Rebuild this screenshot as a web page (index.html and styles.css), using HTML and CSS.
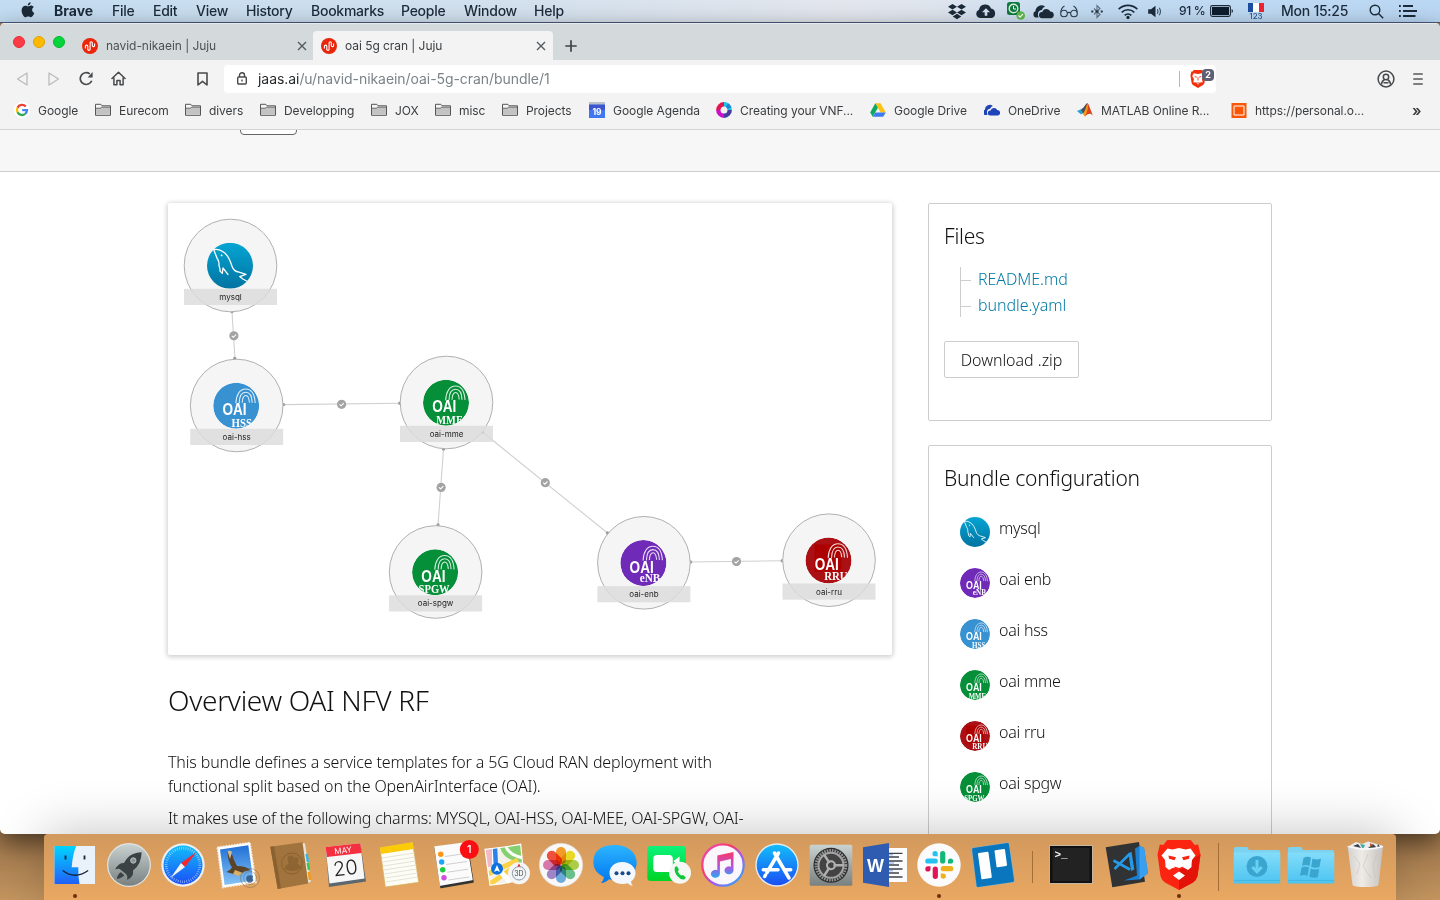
FILE: index.html
```html
<!DOCTYPE html>
<html lang="en">
<head>
<meta charset="utf-8">
<title>oai 5g cran | Juju</title>
<link rel="stylesheet" href="styles.css">
</head>
<body>
<svg class="defs" width="0" height="0" aria-hidden="true">
  <defs>
    <linearGradient id="gSql" x1="0" y1="0" x2="0" y2="1"><stop offset="0" stop-color="#06a5d3"/><stop offset="1" stop-color="#0073a1"/></linearGradient>
    <linearGradient id="gSilver" x1="0" y1="0" x2="0" y2="1"><stop offset="0" stop-color="#c9d3d2"/><stop offset="1" stop-color="#79807f"/></linearGradient>
    <linearGradient id="gFinder" x1="0" y1="0" x2="0" y2="1"><stop offset="0" stop-color="#00d4ff"/><stop offset="1" stop-color="#2060f8"/></linearGradient>
    <linearGradient id="gBlue" x1="0" y1="0" x2="0" y2="1"><stop offset="0" stop-color="#12bdfb"/><stop offset="1" stop-color="#1a4ff5"/></linearGradient>
    <linearGradient id="gMsg" x1="0" y1="0" x2="0" y2="1"><stop offset="0" stop-color="#2cb5ff"/><stop offset="1" stop-color="#0076ef"/></linearGradient>
    <linearGradient id="gGreen" x1="0" y1="0" x2="0" y2="1"><stop offset="0" stop-color="#0cf37c"/><stop offset="1" stop-color="#00d324"/></linearGradient>
    <linearGradient id="gSky" x1="0" y1="0" x2="0" y2="1"><stop offset="0" stop-color="#1f6fd6"/><stop offset="1" stop-color="#86c3f5"/></linearGradient>
    <linearGradient id="gNote" x1="0" y1="0" x2="0" y2="1"><stop offset="0" stop-color="#fb3a62"/><stop offset=".55" stop-color="#b651dc"/><stop offset="1" stop-color="#27a8f5"/></linearGradient>
    <linearGradient id="gRing" x1="0" y1="0" x2="1" y2="1"><stop offset="0" stop-color="#e64fd0"/><stop offset=".35" stop-color="#fb3a62"/><stop offset=".6" stop-color="#a45cf0"/><stop offset="1" stop-color="#13b5fb"/></linearGradient>
    <linearGradient id="gFolder" x1="0" y1="0" x2="0" y2="1"><stop offset="0" stop-color="#83dcfa"/><stop offset="1" stop-color="#4cc4f1"/></linearGradient>
    <linearGradient id="gTrash" x1="0" y1="0" x2="1" y2="0"><stop offset="0" stop-color="#d4d4d4"/><stop offset=".4" stop-color="#f0f0f0"/><stop offset="1" stop-color="#c4c4c4"/></linearGradient>
    <clipPath id="disc"><circle r="23"/></clipPath>

    <symbol id="base" viewBox="-23 -23 46 46" overflow="visible">
      <path d="M-.3-2.6C0-11 3.500-16.800 9.500-16.800S18.500-11 19-2.800M3-2.600C3.200-9 5.500-13.500 9.500-13.500s6.300 4.300 6.500 10.500M6-3C6.200-7.500 7.500-10.300 9.600-10.300s3.300 2.800 3.600 7" fill="none" stroke="#fff" stroke-opacity=".85" stroke-width="1.100"/>
      <text class="oai-word" x="-13.800" y="9.400" textLength="24.200" lengthAdjust="spacingAndGlyphs">OAI</text>
    </symbol>
    <symbol id="mysql" viewBox="-23 -23 46 46">
      <circle r="23" fill="url(#gSql)"/>
      <path d="M-1.700 9L-7 2.200-7.700 7.500-10 5.300C-9.500 2-11.500.500-11-2c.3-3-2-5-2.300-6.500L-16.300-16.200C-13-17-10-16-7.700-14.500-3-12.500 0-6 2 .5 3 3.500 6 6 9 6.300L16 8.600 9.700 10.800 12.500 13 17 15.500" fill="none" stroke="#fff" stroke-width="1.300" stroke-linejoin="round"/>
      <circle cx="-8.400" cy="-10.400" r=".9" fill="#fff"/>
    </symbol>
    <symbol id="hss" viewBox="-23 -23 46 46"><g clip-path="url(#disc)"><circle r="23" fill="#3891d1"/><use href="#base" x="-23" y="-23" width="46" height="46"/><text class="oai-kind" x="-4.600" y="21.200" textLength="20.500" lengthAdjust="spacingAndGlyphs">HSS</text></g></symbol>
    <symbol id="mme" viewBox="-23 -23 46 46"><g clip-path="url(#disc)"><circle r="23" fill="#048f38"/><use href="#base" x="-23" y="-23" width="46" height="46"/><text class="oai-kind" x="-9.700" y="21.500" textLength="26.500" lengthAdjust="spacingAndGlyphs">MME</text></g></symbol>
    <symbol id="spgw" viewBox="-23 -23 46 46"><g clip-path="url(#disc)"><circle r="23" fill="#048f38"/><use href="#base" x="-23" y="-23" width="46" height="46"/><text class="oai-kind" x="-16.500" y="21" textLength="31" lengthAdjust="spacingAndGlyphs">SPGW</text></g></symbol>
    <symbol id="enb" viewBox="-23 -23 46 46"><g clip-path="url(#disc)"><circle r="23" fill="#6f2bb8"/><use href="#base" x="-23" y="-23" width="46" height="46"/><text class="oai-kind" x="-3.600" y="18.800" textLength="20.500" lengthAdjust="spacingAndGlyphs">eNB</text></g></symbol>
    <symbol id="rru" viewBox="-23 -23 46 46"><g clip-path="url(#disc)"><circle r="23" fill="#ab1015"/><path d="M-14-16h27v27h-27z" fill="#ad0000"/><use href="#base" x="-23" y="-23" width="46" height="46"/><text class="oai-kind" x="-4.300" y="19.800" textLength="23.500" lengthAdjust="spacingAndGlyphs">RRU</text></g></symbol>

    <symbol id="juju" viewBox="0 0 16 16"><circle cx="8" cy="8" r="8" fill="#e9260b"/><path d="M3.400 10.500V8.300a1.200 1.200 0 0 1 2.400 0V12M5.800 9v2.200a1.100 1.100 0 0 0 2.300 0V4.800a1.100 1.100 0 0 1 2.200 0v2.700a1.100 1.100 0 0 0 2.300 0V5.500" fill="none" stroke="#fff" stroke-width="1.100"/></symbol>
    <symbol id="folder" viewBox="0 0 16 16"><path d="M.5 13.300V2.300h5.300l1.200 1.500h8.500v9.500z" fill="#f5f5f5" stroke="#565656"/><path d="M1 6h4.300l1.500-1H15v7.800H1z" fill="#c3c3c3"/><path d="M.5 6.200h4.700l1.600-1.100h8.700" fill="none" stroke="#565656" stroke-width=".8"/></symbol>
    <symbol id="x" viewBox="0 0 10 10"><path d="M1 1l8 8M9 1L1 9" stroke="#555b60" stroke-width="1.400"/></symbol>
    <symbol id="clouds" viewBox="0 0 20 14"><path d="M1.800 12.500A3 3 0 0 1 2 6.800 5.500 5.500 0 0 1 11 2.500a4 4 0 0 0-3 3C4.500 5.500 3.500 9.500 5 12.500z"/><path d="M8 13.300a2.900 2.900 0 0 1 .4-5.800 4 4 0 0 1 7.500-.5 3.200 3.200 0 0 1 .8 6.300z"/></symbol>
    <symbol id="check" viewBox="-5 -5 10 10"><circle r="4.600" fill="#a3a3a3"/><path d="M-2.100 0L-.5 1.500 2.200-1.200" fill="none" stroke="#fff" stroke-width="1.100"/></symbol>
    <symbol id="dockfolder" viewBox="0 0 54 66"><path d="M4 49V14.500q0-1.500 1.500-1.500h11q1 0 1.500 1l.8 2H48.500q1.500 0 1.500 1.500V49z" fill="#7dd2f0"/><path d="M3.700 18.500h46.600V48.500q0 1-1 1H4.700q-1 0-1-1z" fill="url(#gFolder)"/><path d="M4 46.500h46" stroke="#3fafd9" stroke-width=".7"/></symbol>
  </defs>
</svg>

<header class="menubar">
  <nav class="menus">
    <svg class="apple" viewBox="0 0 14 16"><path d="M9.600.2c.1 1.600-1.300 3.200-2.800 3.200C6.600 1.900 8 .4 9.600.2zM7 4.400c.7 0 1.700-.8 3-.8 1.200 0 2.200.6 2.800 1.500-2.500 1.500-2 4.900.5 5.900-.7 1.900-2 4.200-3.500 4.200-1 0-1.400-.6-2.600-.6s-1.600.6-2.500.6C2.800 15.200.6 11.500.6 8.400c0-3 1.900-4.700 3.700-4.700 1.200 0 2 .7 2.700.7z" fill="#1a2a38"/></svg>
    <b>Brave</b><span>File</span><span>Edit</span><span>View</span><span>History</span><span>Bookmarks</span><span>People</span><span>Window</span><span>Help</span>
  </nav>
  <div class="status">
    <svg width="18" height="17" viewBox="0 0 18 17" fill="#1c2b3a"><path d="M4.500 1L9 3.700 4.500 6.500 0 3.700zM13.500 1L18 3.700l-4.500 2.800L9 3.700zM4.500 6.700L9 9.500l-4.500 2.700L0 9.500zM13.500 6.700L18 9.500l-4.500 2.700L9 9.500zM9 10.800l4.300 2.600L9 16.200l-4.300-2.800z"/></svg>
    <svg width="20" height="14" viewBox="0 0 20 14" fill="#1c2b3a"><path d="M4.500 14A4.300 4.300 0 0 1 3 5.700 6.200 6.200 0 0 1 15 4.600 4.800 4.800 0 0 1 15.500 14z"/><path d="M10 4.300l4 4h-2.700v3.500H8.700V8.300H6z" fill="#d5e4f2"/></svg>
    <svg width="18" height="18" viewBox="0 0 18 18"><rect x="0" y="0" width="13" height="13" rx="2.500" fill="#0f7a3e"/><circle cx="6.500" cy="6.500" r="4.300" fill="none" stroke="#d9efe0" stroke-width="1.400"/><path d="M6.500 4v3H9" stroke="#fff" fill="none"/><circle cx="13.700" cy="13.500" r="4.300" fill="#5fb94b"/><path d="M11.500 13.500l1.600 1.600 2.800-3" stroke="#fff" stroke-width="1.300" fill="none"/></svg>
    <svg width="21" height="15" viewBox="0 0 18 14" fill="#1c2b3a"><use href="#clouds" x="-.5" width="20" height="14"/></svg>
    <svg width="18" height="13" viewBox="0 0 18 13" fill="none" stroke="#2c3b4a" stroke-width="1.100"><circle cx="4" cy="8.500" r="3.300"/><circle cx="14" cy="8.500" r="3.300"/><path d="M7.300 8q1.700-1.300 3.400 0M.8 7.500Q1 3 4.500 1M17.200 7.500Q17 3 13.500 1"/></svg>
    <svg width="12" height="15" viewBox="0 0 12 15" fill="none" stroke="#5b6d7f" stroke-width="1.100"><path d="M3 4.500l6 6L6 13.500v-12l3 3-6 6"/><path d="M.3 7.500h2M4.500 7.500h3M9.700 7.500h2" stroke="#26343f" stroke-width="2"/></svg>
    <svg width="20" height="15" viewBox="0 0 20 15" fill="none" stroke="#1c2b3a" stroke-width="1.700"><path d="M.7 5.200a13 13 0 0 1 18.600 0M3.700 8.300a9 9 0 0 1 12.600 0M6.700 11.300a4.800 4.800 0 0 1 6.600 0"/><circle cx="10" cy="13.500" r=".8" fill="#1c2b3a"/></svg>
    <svg width="14" height="13" viewBox="0 0 14 13"><path d="M.2 4.300h2.800L7.500 .8v11.400L3 8.700H.2z" fill="#1c2b3a"/><path d="M9.300 4.300q1.300 2.200 0 4.500M11.300 2.800q2.300 3.700 0 7.400" fill="none" stroke="#3c4c5b" stroke-width="1.100"/></svg>
    <span class="pct">91 %</span>
    <svg width="24" height="12" viewBox="0 0 24 12"><rect x=".6" y=".6" width="19.800" height="10.800" rx="1.800" fill="none" stroke="#1c2b3a" stroke-width="1.100"/><rect x="2" y="2" width="17" height="8" fill="#0d1d2e"/><path d="M21.600 4v4q1.400-.6 1.400-2t-1.400-2z" fill="#1c2b3a"/></svg>
    <span class="flag"><i></i><small>123</small></span>
    <span>Mon 15:25</span>
    <svg width="15" height="15" viewBox="0 0 15 15" fill="none" stroke="#1c2b3a" stroke-width="1.400"><circle cx="6" cy="6" r="4.800"/><path d="M9.500 9.500l4.700 4.700"/></svg>
    <svg width="18" height="12" viewBox="0 0 18 12"><path d="M0 1h1.800M0 6h1.800M0 11h1.800M4 1h10M4 6h14M4 11h12.500" stroke="#1c2b3a" stroke-width="1.900"/></svg>
  </div>
</header>

<main class="window">
  <div class="tabstrip">
    <div class="lights"><i class="red"></i><i class="yellow"></i><i class="green"></i></div>
    <div class="tab"><svg width="16" height="16"><use href="#juju"/></svg><span>navid-nikaein | Juju</span><svg class="close"><use href="#x"/></svg></div>
    <div class="tab active"><svg width="16" height="16"><use href="#juju"/></svg><span>oai 5g cran | Juju</span><svg class="close"><use href="#x"/></svg></div>
    <svg class="plus" viewBox="0 0 12 12"><path d="M6 .3v11.400M.3 6h11.400" stroke="#3d4347" stroke-width="1.700"/></svg>
  </div>

  <div class="toolbar">
    <svg width="12" height="14" viewBox="0 0 12 14" fill="none" stroke="#b9bbbc" stroke-width="1.300"><path d="M11 1v12L1.500 7z" stroke-linejoin="round"/></svg>
    <svg width="12" height="14" viewBox="0 0 12 14" fill="none" stroke="#b9bbbc" stroke-width="1.300"><path d="M1 1v12l9.500-6z" stroke-linejoin="round"/></svg>
    <svg width="15" height="15" viewBox="0 0 15 15" fill="none" stroke="#47494b" stroke-width="1.700"><path d="M12.700 9.700A5.900 5.900 0 1 1 10.800 2.900"/><path d="M13.600 1v5.500H8.700z" fill="#47494b" stroke="none"/></svg>
    <svg width="15" height="15" viewBox="0 0 15 15" fill="none" stroke="#47494b" stroke-width="1.500" stroke-linejoin="round" stroke-linecap="round"><path d="M1 7.500L7.500 1.300 14 7.500M2.900 7v6.700h3V9.500h3.200v4.200h3V7"/></svg>
    <svg class="bm" width="11" height="14" viewBox="0 0 11 14" fill="none" stroke="#47494b" stroke-width="1.600" stroke-linejoin="round"><path d="M1 1h9v12L5.500 9.300 1 13z"/></svg>
    <div class="url">
      <svg width="10" height="13" viewBox="0 0 10 13" fill="none" stroke="#47494b" stroke-width="1.400"><rect x=".7" y="5" width="8.600" height="7" rx="1"/><path d="M2.500 5V3.300a2.500 2.500 0 0 1 5 0V5M5 7.500v2"/></svg>
      <p><span>jaas.ai</span>/u/navid-nikaein/oai-5g-cran/bundle/1</p>
      <i class="bar"></i>
      <span class="shield"><svg width="16" height="18" viewBox="0 0 42 50"><path d="M9.300 0h22.700l4 4.500 3.500-.5 2.500 10.300-3 21q-1 4-4 6.500L21 50 7 42Q4 39.500 3 35L0 14.300 2.500 4 6 4.500z" fill="#f4300b"/><path d="M9 9l12 2 12-2 4 8-5 9 2 8-8 1-5 6-5-6-8-1 2-8-5-9z" fill="#fff"/><path d="M12 18l6 2M30 18l-6 2M21 20v9M17 36h8" stroke="#f4300b" stroke-width="2.400" fill="none"/></svg><b>2</b></span>
    </div>
    <svg class="user" width="18" height="18" viewBox="0 0 18 18" fill="none" stroke="#47494b" stroke-width="1.500"><circle cx="9" cy="9" r="7.900"/><circle cx="9" cy="7" r="2.700"/><path d="M4.300 14.500q.7-4 3.200-4.800M13.700 14.500q-.7-4-3.200-4.800M6.500 12.800h5"/></svg>
    <svg width="10" height="12" viewBox="0 0 10 12"><path d="M.8 1h8.400M.8 6h8.400M.8 11h8.400" stroke="#565859" stroke-width="1.700" stroke-linecap="round"/></svg>
  </div>

  <div class="bookmarks">
    <span><svg viewBox="0 0 16 16"><circle cx="8" cy="8" r="8" fill="#fff"/><g fill="none" stroke-width="2.300"><path d="M11.800 4.600A5 5 0 0 0 3.500 5.800" stroke="#ea4335"/><path d="M3.500 5.800a5 5 0 0 0 0 4.400" stroke="#fbbc05"/><path d="M3.500 10.200a5 5 0 0 0 7.700 1.600" stroke="#34a853"/><path d="M11.200 11.800A5 5 0 0 0 13 8.200H8.200" stroke="#4285f4"/></g></svg>Google</span>
    <span><svg><use href="#folder"/></svg>Eurecom</span>
    <span><svg><use href="#folder"/></svg>divers</span>
    <span><svg><use href="#folder"/></svg>Developping</span>
    <span><svg><use href="#folder"/></svg>JOX</span>
    <span><svg><use href="#folder"/></svg>misc</span>
    <span><svg><use href="#folder"/></svg>Projects</span>
    <span><svg viewBox="0 0 16 16"><path d="M0 2h16v14H0z" fill="#3367d6"/><path d="M0 0h16v3H0z" fill="#b9bfcb"/><path d="M0 2.500h16V8H0z" fill="#3a55cf"/><path d="M0 8h16v8H0z" fill="#3f76f2"/><text x="8" y="12.500" text-anchor="middle" class="cal-fav">19</text></svg>Google Agenda</span>
    <span><svg viewBox="0 0 16 16" fill="none" stroke-width="4.400"><path d="M8 2.300A5.700 5.700 0 0 1 13.700 8" stroke="#18c7e3"/><path d="M13.700 8A5.700 5.700 0 0 1 8 13.700" stroke="#473a9f"/><path d="M8 13.700A5.700 5.700 0 0 1 2.300 8" stroke="#c911c9"/><path d="M2.300 8A5.700 5.700 0 0 1 8 2.300" stroke="#e3144f"/><path d="M11 3.200a5.700 5.700 0 0 1 2.400 3" stroke="#2286d8"/></svg>Creating your VNF...</span>
    <span><svg viewBox="0 0 16 16"><path d="M5.300 1.200h5.200l5.300 9.200h-5.200z" fill="#fbc215"/><path d="M5.300 1.200l2.600 4.600-5.200 9L.2 10.400z" fill="#0da960"/><path d="M5.400 10.400h10.400l-2.600 4.400H2.700z" fill="#3f7bee"/></svg>Google Drive</span>
    <span><svg viewBox="0 0 18 14" fill="#1f43b8"><use href="#clouds" x="-1" width="20" height="14"/></svg>OneDrive</span>
    <span><svg viewBox="0 0 16 16"><path d="M0 9l4-1.800L7 10l-3 2.600z" fill="#2aa4cf"/><path d="M4 7.200C7 6.500 8 2 10.500 1L9 9l-3 3z" fill="#43515c"/><path d="M10.500 1C12.500 3 14 10 16 13.500 13 10.500 10.500 12 8 14.500L6 11.500C8.500 9 9 3 10.500 1z" fill="#d7431c"/><path d="M10.500 1c1 4 0 9-2.500 13.500L6 11.500C8.500 9 9.500 4 10.500 1z" fill="#f59b1c"/></svg>MATLAB Online R...</span>
    <span><svg viewBox="0 0 16 16"><path d="M.5 1h15v15H.5z" fill="#fb5607"/><path d="M3 4h10v9H3z" fill="none" stroke="#fff"/></svg>https://personal.o...</span>
    <b>»</b>
  </div>

  <div class="page">
    <div class="pagehead"><button></button></div>
    <div class="cols">
      <article>
        <svg class="canvas" viewBox="168 203 724 452">
          <g stroke="#d0d0d0" stroke-width="1.100"><path d="M232 312l3 47M283.500 404.600L400 403.200M443.500 449L438 525.500M483 432.500L607.500 533M690 562l92.500-1.300"/></g>
          <g fill="#9c9c9c"><circle cx="232" cy="311.500" r="1.700"/><circle cx="234.700" cy="358.500" r="1.700"/><circle cx="283.500" cy="404.600" r="1.700"/><circle cx="399.800" cy="403.200" r="1.700"/><circle cx="443.500" cy="449" r="1.700"/><circle cx="438" cy="525" r="1.700"/><circle cx="483" cy="432.500" r="1.500"/><circle cx="607.500" cy="533" r="1.700"/><circle cx="690.500" cy="562" r="1.700"/><circle cx="782.300" cy="560.700" r="1.700"/></g>
          <g><use href="#check" x="228.900" y="330.800" width="10" height="10"/><use href="#check" x="336.600" y="399.300" width="10" height="10"/><use href="#check" x="436.100" y="482.400" width="10" height="10"/><use href="#check" x="540.300" y="477.700" width="10" height="10"/><use href="#check" x="731.500" y="556.600" width="10" height="10"/></g>
          <g class="node" transform="translate(230.500 265.500)"><circle r="46.300"/><use href="#mysql" x="-23.500" y="-22.700" width="46" height="46"/><rect x="-46.500" y="23.300" width="93" height="16.200"/><text y="34.400">mysql</text></g>
          <g class="node" transform="translate(236.700 405.500)"><circle r="46.300"/><use href="#hss" x="-23.500" y="-22.700" width="46" height="46"/><rect x="-46.500" y="23.300" width="93" height="16.200"/><text y="34.400">oai-hss</text></g>
          <g class="node" transform="translate(446.500 402.500)"><circle r="46.300"/><use href="#mme" x="-23.500" y="-22.700" width="46" height="46"/><rect x="-46.500" y="23.300" width="93" height="16.200"/><text y="34.400">oai-mme</text></g>
          <g class="node" transform="translate(435.600 572)"><circle r="46.300"/><use href="#spgw" x="-23.500" y="-22.700" width="46" height="46"/><rect x="-46.500" y="23.300" width="93" height="16.200"/><text y="34.400">oai-spgw</text></g>
          <g class="node" transform="translate(643.900 562.800)"><circle r="46.300"/><use href="#enb" x="-23.500" y="-22.700" width="46" height="46"/><rect x="-46.500" y="23.300" width="93" height="16.200"/><text y="34.400">oai-enb</text></g>
          <g class="node" transform="translate(829 560.200)"><circle r="46.300"/><use href="#rru" x="-23.500" y="-22.700" width="46" height="46"/><rect x="-46.500" y="23.300" width="93" height="16.200"/><text y="34.400">oai-rru</text></g>
        </svg>
        <h1>Overview OAI NFV RF</h1>
        <p>This bundle defines a service templates for a 5G Cloud RAN deployment with<br><span class="line2">functional split based on the OpenAirInterface (OAI).</span></p>
        <p class="second">It makes use of the following charms: MYSQL, OAI-HSS, OAI-MEE, OAI-SPGW, OAI-</p>
      </article>
      <aside>
        <section class="card files">
          <h2>Files</h2>
          <ul class="tree"><li><span>README.md</span></li><li><span>bundle.yaml</span></li></ul>
          <button class="download">Download .zip</button>
        </section>
        <section class="card config">
          <h2>Bundle configuration</h2>
          <ul class="apps">
            <li><svg><use href="#mysql"/></svg>mysql</li>
            <li><svg><use href="#enb"/></svg>oai enb</li>
            <li><svg><use href="#hss"/></svg>oai hss</li>
            <li><svg><use href="#mme"/></svg>oai mme</li>
            <li><svg><use href="#rru"/></svg>oai rru</li>
            <li><svg><use href="#spgw"/></svg>oai spgw</li>
          </ul>
        </section>
      </aside>
    </div>
  </div>
</main>

<footer class="desktop">
  <div class="dock">
    <svg viewBox="0 0 54 66"><path d="M6.500 12H47v38H6.500z" fill="#e9f1fb"/><path d="M6.500 12h21.700q-3.500 8-4.500 21.300h6.600Q30 42 31.500 50h-25z" fill="url(#gFinder)"/><path d="M17.500 21.500v4M36.500 21.500v4" stroke="#152538" stroke-width="1.800"/><path d="M14.700 36.500q12 9.500 25.500 0" fill="none" stroke="#152538" stroke-width="1.300"/><circle cx="27" cy="62" r="2" fill="#6b2f06"/></svg>
    <svg viewBox="0 0 54 66"><circle cx="27" cy="31" r="21.300" fill="url(#gSilver)" stroke="#dfe5e5" stroke-width="1.200"/><path d="M39.700 18.300Q30 18.500 25 24.500q-1.500 2-3 4.500-5-1-9 6.500 4-1.500 6 .5l5.500 4.500q1.500 2 .5 5.500 7-3 6-9.500 8-5 8.700-18.200zM15 43.500q2-5 4-5.200l3.300 3Q21 43.500 15 45z" fill="#3c4143"/><circle cx="31.300" cy="26.500" r="2.700" fill="#8e9797" stroke="#b9c2c2"/></svg>
    <svg viewBox="0 0 54 66"><circle cx="27" cy="31" r="21.700" fill="#e9eef2"/><circle cx="27" cy="31" r="19.500" fill="url(#gBlue)"/><circle cx="27" cy="31" r="16.800" fill="none" stroke="#fff" stroke-opacity=".65" stroke-width="2.600" stroke-dasharray=".6 1.600"/><path d="M40.500 18L29 33 25 29z" fill="#f5272d"/><path d="M14.500 44L25 29l4 4z" fill="#f3f3f3"/></svg>
    <svg viewBox="0 0 54 66"><path d="M7.300 13.300L40 8.500 46 48.500 12.700 53.500z" fill="#fff" stroke="#f3efe8" stroke-width="1.600" stroke-dasharray="1.600 1.200"/><path d="M10 15.500L38.300 11.200 43.300 46.500 14.600 51z" fill="url(#gSky)"/><path d="M17.500 17q5 1.500 6 8l3.500 7q9 0 13.500 4l-6 1.500q-5 5-11 2.500l-7-2q4-2 5.500-4.500-4.500-7-4.500-16.500z" fill="#5b4327"/><path d="M25 36l8 3-5 3-5-2z" fill="#d8b06a"/><path d="M17.500 17q3-1 4.500 1l-2 7z" fill="#cdb999"/><circle cx="40" cy="44" r="9.500" fill="none" stroke="#6b6250" stroke-opacity=".5" stroke-width=".9"/><circle cx="40" cy="44" r="6.500" fill="none" stroke="#6b6250" stroke-opacity=".4"/><path d="M37 42q3-1.500 6 0-1.500 3 .5 4-2 3.500-3.500 2.500-3 1-4-4z" fill="#2c4f7c" fill-opacity=".8"/></svg>
    <svg viewBox="0 0 54 66"><path d="M37.700 9l3.300.5L47 47.500 43 49.500z" fill="#e8e3d6"/><path d="M41.500 20l2.300-.3 1.300 8-2.400.3z" fill="#2bb7e8"/><path d="M42.600 29l2.400-.3 1.200 7-2.400.3z" fill="#36c94d"/><path d="M43.600 38l2.600-.3 1.300 8-2.700.5z" fill="#f09a1e"/><path d="M6.300 12.700L38.500 8.300 44.300 49.500 13.700 55z" fill="#a0743c"/><path d="M6.300 12.700L10 12.200 17 54.300 13.700 55z" fill="#8a6130"/><circle cx="28" cy="29.500" r="10.500" fill="none" stroke="#8a6130" stroke-width="1"/><path d="M20.500 35q1-4 4-5-2.500-8 1.500-8.500t3.500 2.500q4-2.500 5 1 .5 3-1.500 5 4 1 4.500 3.500-7 6-17 1.500z" fill="#8a6130" fill-opacity=".8"/></svg>
    <svg viewBox="0 0 54 66"><path d="M7.700 13.500L42.500 10 48 47.500 11 53z" fill="#5c6770"/><path d="M7.500 13L42.300 9.200 46.500 44.500 11.500 49.500z" fill="#f7f7f7"/><path d="M7.500 13L42.300 9.200 43.600 19 9 23z" fill="#f42f3f"/><text class="cal-month" transform="rotate(-7 25 19)" x="25.500" y="19.300">MAY</text><text class="cal-day" transform="rotate(-7 27 34)" x="27.500" y="41">20</text></svg>
    <svg viewBox="0 0 54 66"><path d="M8 14L40.500 8.500 46.700 48.300 13.300 53z" fill="#fdfdf6" stroke="#d6b256" stroke-width=".7"/><path d="M8 13.500L40.500 8.300 41.700 15 9 20z" fill="#fccb08"/><path d="M10 24l32.500-5M10.600 28l32.500-5M11.200 32l32.500-5M11.800 36l32.500-5M12.400 40l32.500-5M13 44l32.500-5M13.500 48l32.500-5" stroke="#dcdccf" stroke-width=".8"/></svg>
    <svg viewBox="0 0 54 66"><path d="M9 14L41 10 47 48 15 53.500z" fill="#333" stroke="#333" stroke-width="1.500" stroke-linejoin="round"/><path d="M9 13L40 9 46 45.500 14.500 51z" fill="#fbfbfb" stroke="#fbfbfb" stroke-width="1.500" stroke-linejoin="round"/><path d="M19 22.500l21-3M20 30.500l21-3M21.200 38.200l21-3M22.300 46l21-3" stroke="#d0d0d0"/><circle cx="14.700" cy="20.200" r="2.700" fill="#ff9417"/><circle cx="15.700" cy="28" r="2.700" fill="#1aa7f8"/><circle cx="16.700" cy="35.800" r="2.700" fill="#1ccc3c"/><circle cx="18" cy="43.800" r="2.700" fill="#cf4fe0"/><circle cx="43.300" cy="15.500" r="9.500" fill="#fb0d14"/><text class="badge" x="43.300" y="19.300">1</text></svg>
    <svg viewBox="0 0 54 66"><path d="M5 15.300L16 14 28 12.500 40.700 10.300 44.300 47.700 32 47.700 21 50 10 51z" fill="#f4f1e9"/><path d="M5 15.300l8-1 4 17-10 2z" fill="#f2b9c5"/><path d="M20 13.500l20.700-3 2 20-9-4q-10-2-13.700-13z" fill="#84d06e"/><path d="M26 12.700q3 8 16 11" fill="none" stroke="#fff" stroke-width="3"/><path d="M8 40l30-14M10 50l20-14 14 5" fill="none" stroke="#fcd143" stroke-width="5"/><path d="M14.500 14v20M30 48L17 34" stroke="#fff" stroke-width="5"/><path d="M15 14l1 20" stroke="#2a83ea" stroke-width="4.500"/><path d="M5 15.300L16 14 28 12.500 40.700 10.300 44.300 47.700 32 47.700 21 50 10 51z" fill="none" stroke="#fff" stroke-width="1.200"/><circle cx="17" cy="34.700" r="6" fill="#0c72e0"/><path d="M17 31l3 7-3-1.500-3 1.500z" fill="#fff"/><circle cx="39" cy="39.300" r="11" fill="#f4f5f6"/><circle cx="39" cy="39.300" r="6.700" fill="none" stroke="#8c9aa6"/><text class="three-d" x="39" y="42">3D</text><path d="M37.500 32.500L39 29.500l1.500 3z" fill="#f01e28"/></svg>
    <svg viewBox="0 0 54 66"><circle cx="27" cy="31" r="21.700" fill="#f8f8f8" stroke="#d9d9d9" stroke-width=".6"/><g class="petals"><rect x="22" y="13" width="10" height="17.500" rx="5" fill="#fb9617"/><rect x="22" y="13" width="10" height="17.500" rx="5" fill="#eedd18" transform="rotate(45 27 31)"/><rect x="22" y="13" width="10" height="17.500" rx="5" fill="#a9cf3b" transform="rotate(90 27 31)"/><rect x="22" y="13" width="10" height="17.500" rx="5" fill="#5fc083" transform="rotate(135 27 31)"/><rect x="22" y="13" width="10" height="17.500" rx="5" fill="#63a9de" transform="rotate(180 27 31)"/><rect x="22" y="13" width="10" height="17.500" rx="5" fill="#9b7fc6" transform="rotate(225 27 31)"/><rect x="22" y="13" width="10" height="17.500" rx="5" fill="#d971a8" transform="rotate(270 27 31)"/><rect x="22" y="13" width="10" height="17.500" rx="5" fill="#f4432f" transform="rotate(315 27 31)"/></g></svg>
    <svg viewBox="0 0 54 66"><path d="M27 11c12.500 0 21.700 7.500 21.700 17.500S39.500 46 27 46q-3 0-6-.7-4.500 4-8 3.700 3-2.500 2.800-6Q5.300 38 5.300 28.500 5.300 11 27 11z" fill="url(#gMsg)"/><path d="M34.500 28C42 28 47.500 33 47.500 39q0 5-4.500 8.500.2 3 1.800 4.500-3-.5-5-2.800-2.500.8-5.300.8C27 50 21.500 45.500 21.500 39S27 28 34.500 28z" fill="#f2f8fd"/><g fill="#1b4b86"><circle cx="28.500" cy="39.300" r="2"/><circle cx="34.500" cy="39.300" r="2"/><circle cx="40.500" cy="39.300" r="2"/></g></svg>
    <svg viewBox="0 0 54 66"><rect x="5.300" y="12" width="38.700" height="35" rx="3.500" fill="url(#gGreen)"/><rect x="11.300" y="21" width="19.500" height="17" rx="3.500" fill="#fff"/><path d="M31.500 27l6-4.500v12z" fill="#fff"/><circle cx="38" cy="38.700" r="11" fill="#f5f7f5"/><path d="M32.800 33.500q1.500-2 2.700-.5l1.300 2.500q0 1-1 1.700.8 2.500 3.400 4.300 1.200-.8 2-.3l2.200 1.700q1 1.300-1.300 2.600-3.500.5-6.800-3.500t-2.500-8.500z" fill="#0fc83a"/></svg>
    <svg viewBox="0 0 54 66"><circle cx="27" cy="31" r="20.700" fill="#f9f7fc" stroke="url(#gRing)" stroke-width="2.200"/><path d="M21.300 21.500L37.500 18v18.300a4.500 4 0 1 1-2.600-3.600V25l-11 2.500v12.300a4.500 4 0 1 1-2.600-3.600z" fill="url(#gNote)"/></svg>
    <svg viewBox="0 0 54 66"><circle cx="27" cy="31" r="21.700" fill="#e5eaf2"/><circle cx="27" cy="31" r="20.300" fill="url(#gBlue)"/><g stroke="#fff" stroke-width="3.500" stroke-linecap="round"><path d="M28.500 19L17 38.500M24.500 19l14.500 25M15.500 41l-.8 1.500M13.300 35.700H28M35.500 35.700h5.200"/></g></svg>
    <svg viewBox="0 0 54 66"><rect x="5.700" y="10.700" width="42.600" height="41" rx="1.500" fill="url(#gSilver)"/><circle cx="27" cy="31.300" r="17.500" fill="#2e2e2e"/><circle cx="27" cy="31.300" r="14.800" fill="none" stroke="#949494" stroke-width="3" stroke-dasharray="1.600 1"/><circle cx="27" cy="31.300" r="12.500" fill="#434343" stroke="#a5a5a5" stroke-width="2"/><circle cx="27" cy="31.300" r="4" fill="none" stroke="#b5b5b5" stroke-width="2"/><path d="M29.500 31.300h10M25.500 29L20 20.500M25.500 33.500L20 42" stroke="#b0b0b0" stroke-width="2.400"/></svg>
    <svg viewBox="0 0 54 66"><path d="M29 14h20v34H29z" fill="#fbfbfb"/><path d="M31 19.300h13.500M31 23h10M31 27h13.500M31 31h10M31 35h13.500M31 39h10M31 43h13.500" stroke="#3d4450" stroke-width="1.300"/><path d="M31 20.800h4M31 29h5M31 36.800h4" stroke="#7ca5e0"/><path d="M5 13.300L31 9v44L5 48.700z" fill="#2f5cb0"/><text class="word-w" x="17.500" y="38">W</text></svg>
    <svg viewBox="0 0 54 66"><circle cx="27" cy="31" r="21.700" fill="#fbfbfb"/><g stroke-linecap="round" stroke-width="5.200"><path d="M15.800 27h7.400" stroke="#25c1f0"/><path d="M30.700 19.700v7.300" stroke="#12b77a"/><path d="M31.300 34.700h7.400" stroke="#eeb11d"/><path d="M23.300 35v7.300" stroke="#e11457"/></g><path d="M25.700 22.300h-2.600a2.600 2.600 0 1 1 2.600-2.600z" fill="#25c1f0"/><path d="M36 29.600V27a2.600 2.600 0 1 1 2.600 2.600z" fill="#12b77a"/><path d="M28.700 39.500h2.600a2.600 2.600 0 1 1-2.600 2.600z" fill="#eeb11d"/><path d="M18.500 32.300v2.600a2.600 2.600 0 1 1-2.600-2.600z" fill="#e11457"/><circle cx="27" cy="62" r="2" fill="#6b2f06"/></svg>
    <svg viewBox="0 0 54 66"><path d="M7.500 15.500L41.500 10.500 46.700 46.500 12 51.500z" fill="#0a76bd" stroke="#8fb2c0" stroke-width="4" stroke-linejoin="round"/><path d="M7.500 15.500L41.500 10.500 46.700 46.500 12 51.500z" fill="#0a76bd" stroke="#0a76bd" stroke-width="2.800" stroke-linejoin="round"/><path d="M13 20L21.500 18.800 24.800 43 16.300 44.300zM29.500 17.200l8.500-1.200L40 31l-8.500 1.300z" fill="#fff" stroke="#fff" stroke-width="2" stroke-linejoin="round"/></svg>
    <i class="sep short"></i>
    <svg viewBox="0 0 54 66"><path d="M5.300 11.300h43.400v38.400H5.300z" fill="#bdbdbd"/><path d="M6 12h42v37H6z" fill="#111"/><path d="M8.500 14h37v33h-37z" fill="#222"/><text class="prompt" x="10.500" y="24">&gt;_</text></svg>
    <svg viewBox="0 0 54 66"><path d="M7.700 13.300L41 8l6 39.700-32.700 5.600z" fill="#303234"/><path d="M37 14.500l4.500-2.500 4.500 1.500L50 39.300 41.500 45.500l-15.500 1 13-5z" fill="#1b7fd0"/><path d="M46 13.500L50 39.300 41.500 45.500 41.500 12z" fill="#3a9ff0"/><path d="M15.500 26.500l16.500 9M32 19.500L16.500 35" fill="none" stroke="#249ae8" stroke-width="2.600"/><path d="M30.500 19.500l3-1.800 2.800 17.800-3.300 1.500z" fill="#249ae8"/></svg>
    <svg viewBox="0 0 54 66"><path d="M15.300 6h23.400l4 5 3.500-.5 2.300 10-3 21.500q-1 4-4.500 6.500L27 56 13 48.500Q9.500 46 8.500 42L5.500 20.500l2.300-10 3.500.5z" fill="#fb2410"/><path d="M27 32v24l14-7.500q3.500-2.500 4.500-6.500l3-21.500z" fill="#e3130a"/><path d="M15.500 14.500l5 1 6.500-1.500 6.500 1.500 5-1 5 7-3.500 4.500q-.5 4-.5 7l-3.500 3-3.500-2-3-.5-3 2-3-2-3 .5-3.500 2-3.500-3q0-3-.5-7l-3.500-4.500zM27 37.500l6 4-6 4.500-6-4.500z" fill="#fff"/><path d="M16.500 21.500l7.500 1.700-1.500 3-5.500-1.500zM37.500 21.500L30 23.200l1.500 3 5.500-1.500zM22.500 32.500L27 34l4.500-1.500-.5 2-4 1.300-4-1.300z" fill="#fb2410"/><circle cx="27" cy="62" r="2" fill="#6b2f06"/></svg>
    <i class="sep"></i>
    <svg viewBox="0 0 54 66"><use href="#dockfolder" width="54" height="66"/><circle cx="27" cy="32.500" r="10.500" fill="#3aa5cf"/><path d="M27 26v11M22.300 33l4.700 4.900 4.700-4.900" fill="none" stroke="#69d0f5" stroke-width="3"/></svg>
    <svg viewBox="0 0 54 66"><use href="#dockfolder" width="54" height="66"/><path d="M19.500 24q4-2.300 7.500-.3l-1.500 8.300q-3.500-2-7.500 0zM28.500 24.500q4 2 8.500.3L35.500 33q-4.500 1.700-8.300-.3zM17.500 33.500q4-2 7.500 0L23.500 42q-3.500-2-7.500 0zM26.800 34.500q4 2 8.400.2l-1.500 8.500q-4.500 1.500-8.300-.5z" fill="#3aa5cf"/></svg>
    <svg viewBox="0 0 54 66"><path d="M11 12L18 8l6 2 6-2.500 7 2 7 2-1 5H11z" fill="#e9ecee"/><path d="M15 12l5-2 3 4zM30 14l5-4 4 4zM40 10l3 4h-4z" fill="#3b3f44"/><path d="M22 10l5 1-2 4z" fill="#36a9a0"/><path d="M32 9l3 2-3 2z" fill="#c05a31"/><path d="M9.700 12.500q17.300 5 35.300 0L40.500 51q-1 2-13 2t-13-2z" fill="url(#gTrash)" fill-opacity=".93"/><path d="M16 22l6 8-3 10M30 20l-5 12 8 12M39 20l-4 10 2 14" fill="none" stroke="#bdbdbd" stroke-width="1" stroke-opacity=".5"/><path d="M9.700 12.500q17.300 5 35.300 0" fill="none" stroke="#fafafa" stroke-width="1.300"/></svg>
  </div>
</footer>
</body>
</html>
```
FILE: styles.css
```css
* { box-sizing: border-box; }

html, body { margin: 0; height: 900px; overflow: hidden; }

body {
  width: 1440px;
  display: flex;
  flex-direction: column;
  font-family: Inter, "Liberation Sans", sans-serif;
  background: linear-gradient(#a37a4d 0 834px, #a67c4f 850px, #c3955f 900px);
  color: #1c2b3a;
}

h1, h2, p, ul { margin: 0; padding: 0; font-weight: 300; list-style: none; }
svg { display: block; flex: none; }
.defs { position: absolute; }

/* Menu bar */
.menubar {
  height: 23px;
  flex: none;
  display: flex;
  justify-content: space-between;
  border-bottom: 1px solid #4a5a7c;
  background: linear-gradient(90deg, #c3dcf1, #d3e1ee 35%, #e3e6ed 58%, #dfe5ee 65%, #c2dbf2 75%, #bad7f3);
  font-size: 14px;
  font-weight: 450;
  line-height: 22px;
  letter-spacing: -0.25px;
  white-space: nowrap;
}
.menus {
  display: grid;
  grid-template-columns: 33px 58px 41px 43px 50px 65px 90px 63px 70px 40px;
  padding-left: 21px;
}
.menus b { letter-spacing: 0; }
.menus .apple { width: 14px; height: 16px; margin-top: 2px; }
.status {
  display: grid;
  grid-template-columns: 28px 31px 26px 27px 31px 27px 30px 31px 31px 38px 33px 88px 30px 41px;
  align-items: center;
}
.status .pct { font-size: 12px; letter-spacing: -0.3px; }
.flag { display: flex; flex-direction: column; width: 16px; align-items: center; }
.flag i { width: 16px; height: 9px; background: linear-gradient(90deg, #1c4da1 5px, #fff 5px 11px, #ee2233 11px); }
.flag small { font-size: 8px; line-height: 8px; letter-spacing: 0; color: #265a8c; }

/* Browser window */
.window {
  height: 811px;
  flex: none;
  display: flex;
  flex-direction: column;
  overflow: hidden;
  border-radius: 5px;
  background: #fff;
  box-shadow: 0 8px 24px rgba(0, 0, 0, 0.55);
}
.tabstrip {
  height: 37px;
  flex: none;
  display: flex;
  align-items: flex-end;
  background: #d4d9dc;
  border-top: 1px solid #e6eaec;
}
.lights { display: flex; gap: 8px; align-self: flex-start; padding: 12px 0 0 13px; width: 74px; }
.lights i { width: 12px; height: 12px; border-radius: 50%; }
.red { background: #fc3b47; border: 1px solid #e52f3a; }
.yellow { background: #fdb900; border: 1px solid #e2a300; }
.green { background: #05d43a; border: 1px solid #04b930; }
.tab {
  width: 239px;
  height: 29px;
  display: flex;
  align-items: center;
  gap: 8px;
  padding: 0 6px 0 8px;
  border-radius: 4px 4px 0 0;
  font-size: 12px;
  letter-spacing: -0.05px;
  color: #4b5156;
}
.tab.active { background: #f3f3f3; width: 240px; padding-right: 7px; color: #3a3f43; }
.tab span { flex: 1; }
.tab .close { width: 10px; height: 10px; }
.plus { width: 12px; height: 12px; margin: 0 0 8px 12px; }

.toolbar {
  height: 37px;
  flex: none;
  display: flex;
  align-items: center;
  padding: 0 17px 0 16px;
  background: #f3f3f3;
}
.toolbar > svg { margin-right: 20px; }
.toolbar > svg:nth-child(2) { margin-right: 19px; }
.toolbar > svg:nth-child(3) { margin-right: 17px; }
.toolbar > svg:nth-child(4) { margin-right: 71px; }
.toolbar > svg.bm { margin-right: 16px; }
.url {
  width: 992px;
  height: 28px;
  display: flex;
  align-items: center;
  padding: 0 2px 0 13px;
  border-radius: 4px;
  background: #fff;
  font-size: 14px;
  letter-spacing: -0.06px;
  color: #7b8388;
}
.url p { margin-left: 11px; flex: 1; font-weight: 400; }
.url p span { color: #26292b; }
.bar { width: 1px; height: 16px; background: #b7b7b7; margin-right: 10px; }
.shield { position: relative; width: 24px; height: 18px; }
.shield b {
  position: absolute;
  left: 12px;
  top: -1px;
  width: 12px;
  height: 12px;
  border-radius: 4px;
  background: #5f6073;
  color: #fff;
  font-size: 9px;
  line-height: 12px;
  text-align: center;
}
.toolbar > svg.user { margin: 0 18px 0 161px; }
.toolbar > svg:last-child { margin: 0; }

.bookmarks {
  height: 33px;
  flex: none;
  display: grid;
  grid-template-columns: 81px 90px 75px 111px 64px 67px 87px 127px 154px 114px 93px 154px 181px 20px;
  align-items: center;
  padding: 0 0 5px 14px;
  background: #f3f3f3;
  border-bottom: 1px solid #d3d4d5;
  font-size: 12px;
  letter-spacing: -0.07px;
  color: #3a3d40;
  white-space: nowrap;
}
.bookmarks span { display: flex; align-items: center; gap: 8px; padding-bottom: 1px; }
.bookmarks svg { width: 16px; height: 16px; }
.bookmarks b { font-size: 15px; font-weight: 600; line-height: 18px; }
.cal-fav { font: 700 8.5px Inter, sans-serif; fill: #fff; }

/* Web page */
.page { flex: 1; min-height: 0; overflow: hidden; }
.page, .page button { font-family: "Noto Sans", "Open Sans", sans-serif; font-weight: 300; font-size: 16px; color: #111; letter-spacing: -0.14px; }
.pagehead { height: 42px; background: #f7f7f7; border-bottom: 1px solid #cdcdcd; overflow: hidden; }
.pagehead button {
  display: block;
  width: 57px;
  height: 37px;
  margin: -32px 0 0 240px;
  border: 1px solid #666;
  border-radius: 4px;
  background: #fff;
}
.cols { display: flex; justify-content: space-between; width: 1104px; margin: 31px auto 0; }
article { width: 724px; white-space: nowrap; }
.canvas {
  width: 724px;
  height: 452px;
  border-radius: 2px;
  background: #fff;
  box-shadow: 0 1px 5px 1px rgba(0, 0, 0, 0.2);
}
.node circle { fill: #f5f5f5; stroke: #b0b0b0; stroke-width: 1; }
.node rect { fill: #dcdcdc; fill-opacity: 0.82; }
.node text { font: 400 8px Inter, "Liberation Sans", sans-serif; letter-spacing: 0; fill: #222; text-anchor: middle; }
.oai-word { font: 700 16px "Liberation Sans", sans-serif; letter-spacing: 0; fill: #fff; }
.oai-kind { font: 700 11.5px "Liberation Serif", serif; letter-spacing: 0; fill: #fff; }
.node .oai-word, .node .oai-kind { text-anchor: start; }
article h1 { margin: 25px 0 30px; font-size: 28px; line-height: 40px; letter-spacing: -0.32px; }
article p { line-height: 24px; margin-bottom: 8px; }
article .line2 { letter-spacing: -0.11px; }
article .second { letter-spacing: -0.165px; }

aside { width: 344px; }
.card { border: 1px solid #cdcdcd; border-radius: 2px; padding: 15px; }
.card h2 { font-size: 21px; line-height: 34px; letter-spacing: -0.22px; }
.files { height: 218px; margin-bottom: 24px; }
.tree { margin: 14px 0 24px 16px; height: 50px; border-left: 1px solid #cdcdcd; color: #007aa6; }
.tree li { display: flex; align-items: center; gap: 7px; height: 26px; line-height: 24px; letter-spacing: -0.05px; }
.tree li span { padding-bottom: 2px; }
.tree li::before { content: ""; width: 10px; height: 1px; background: #cdcdcd; }
.page .download {
  display: block;
  width: 135px;
  height: 37px;
  padding: 0;
  border: 1px solid #cdcdcd;
  border-radius: 2px;
  background: #fff;
  letter-spacing: -0.03px;
}
.config { height: 420px; }
.apps { margin: 21px 0 0 16px; letter-spacing: -0.25px; }
.apps li { display: flex; gap: 9px; height: 51px; line-height: 24px; }
.apps svg { width: 30px; height: 30px; margin-top: 1px; }

/* Dock */
.desktop { flex: 1; padding: 0 44px; }
.dock {
  position: relative;
  display: flex;
  align-items: flex-start;
  height: 66px;
  padding: 0 4px;
  border-radius: 4px 4px 0 0;
  background: linear-gradient(#d2995d, #e9a862);
  box-shadow: 0 0 52px rgba(0, 0, 0, 0.25);
}
.dock svg { width: 54px; height: 66px; }
.sep { width: 24px; height: 48px; margin-top: 9px; background: linear-gradient(90deg, transparent 12px, #a46f36 12px 13px, transparent 13px); }
.sep.short { height: 32px; margin-top: 17px; }
.cal-month { font: 400 8px Inter, sans-serif; fill: #fff; text-anchor: middle; }
.cal-day { font: 300 20px Inter, sans-serif; fill: #222; text-anchor: middle; }
.badge { font: 500 11px Inter, sans-serif; fill: #fff; text-anchor: middle; }
.three-d { font: 400 7px Inter, sans-serif; fill: #444; text-anchor: middle; }
.word-w { font: 700 18px "Liberation Sans", sans-serif; fill: #fff; text-anchor: middle; }
.prompt { font: 700 11px "Liberation Mono", monospace; fill: #f2f2f2; }
.petals rect { mix-blend-mode: multiply; fill-opacity: 0.92; }
```
